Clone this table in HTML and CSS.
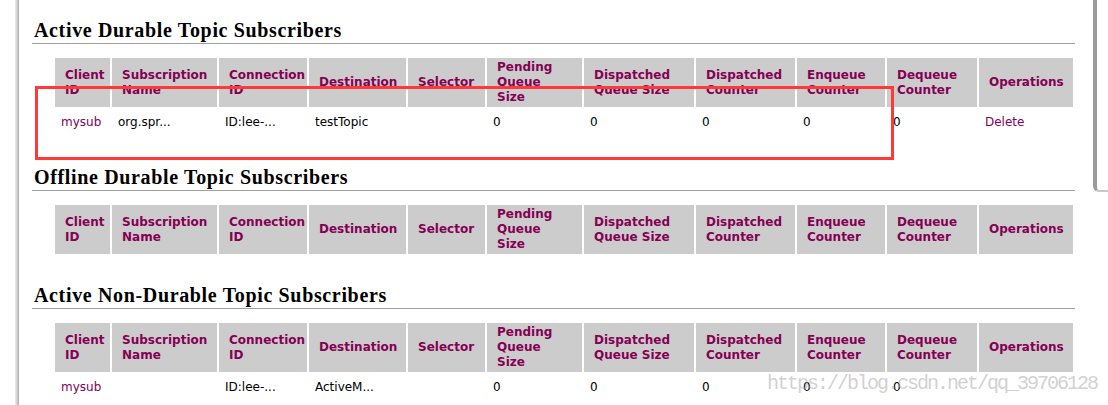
FILE: index.html
```html
<!DOCTYPE html>
<html>
<head>
<meta charset="utf-8">
<link rel="stylesheet" href="styles.css">
</head>
<body>
<div class="frame-left"></div>
<div class="frame-right"></div>
<main class="page">
  <h2 class="section-title">Active Durable Topic Subscribers</h2>
  <table class="grid">
    <colgroup>
      <col class="c1"><col class="c2"><col class="c3"><col class="c4"><col class="c5"><col class="c6"><col class="c7"><col class="c8"><col class="c9"><col class="c10"><col class="c11">
    </colgroup>
    <thead>
      <tr>
        <th>Client ID</th><th>Subscription Name</th><th>Connection ID</th><th>Destination</th><th>Selector</th><th>Pending Queue Size</th><th>Dispatched Queue Size</th><th>Dispatched Counter</th><th>Enqueue Counter</th><th>Dequeue Counter</th><th>Operations</th>
      </tr>
    </thead>
    <tbody>
      <tr>
        <td><a class="link">mysub</a></td><td>org.spr...</td><td>ID:lee-...</td><td>testTopic</td><td></td><td>0</td><td>0</td><td>0</td><td>0</td><td>0</td><td><a class="link">Delete</a></td>
      </tr>
    </tbody>
  </table>

  <h2 class="section-title">Offline Durable Topic Subscribers</h2>
  <table class="grid">
    <colgroup>
      <col class="c1"><col class="c2"><col class="c3"><col class="c4"><col class="c5"><col class="c6"><col class="c7"><col class="c8"><col class="c9"><col class="c10"><col class="c11">
    </colgroup>
    <thead>
      <tr>
        <th>Client ID</th><th>Subscription Name</th><th>Connection ID</th><th>Destination</th><th>Selector</th><th>Pending Queue Size</th><th>Dispatched Queue Size</th><th>Dispatched Counter</th><th>Enqueue Counter</th><th>Dequeue Counter</th><th>Operations</th>
      </tr>
    </thead>
  </table>

  <h2 class="section-title">Active Non-Durable Topic Subscribers</h2>
  <table class="grid">
    <colgroup>
      <col class="c1"><col class="c2"><col class="c3"><col class="c4"><col class="c5"><col class="c6"><col class="c7"><col class="c8"><col class="c9"><col class="c10"><col class="c11">
    </colgroup>
    <thead>
      <tr>
        <th>Client ID</th><th>Subscription Name</th><th>Connection ID</th><th>Destination</th><th>Selector</th><th>Pending Queue Size</th><th>Dispatched Queue Size</th><th>Dispatched Counter</th><th>Enqueue Counter</th><th>Dequeue Counter</th><th>Operations</th>
      </tr>
    </thead>
    <tbody>
      <tr>
        <td><a class="link">mysub</a></td><td></td><td>ID:lee-...</td><td>ActiveM...</td><td></td><td>0</td><td>0</td><td>0</td><td>0</td><td>0</td><td></td>
      </tr>
    </tbody>
  </table>
</main>
<div class="highlight-box"></div>
<div class="watermark">https://blog.csdn.net/qq_39706128</div>
</body>
</html>
```
FILE: styles.css
```css
html, body {
  margin: 0;
  padding: 0;
  background: #fff;
  overflow: hidden;
}
body {
  width: 1108px;
  height: 405px;
  position: relative;
  font-family: "DejaVu Sans", Verdana, sans-serif;
}
.page {
  padding: 17px 33px 0 32px;
}
.section-title {
  margin: 0;
  font-family: "Liberation Serif", "Times New Roman", serif;
  font-weight: bold;
  font-size: 20px;
  letter-spacing: 0.65px;
  line-height: 24px;
  padding: 1px 0 1px 2px;
  border-bottom: 1px solid #a0a0a0;
  color: #000;
}
.grid {
  table-layout: fixed;
  border-collapse: separate;
  border-spacing: 2px;
  width: 1022px;
  margin: 12px 0 26px 21px;
}
.c1 { width: 55px; }
.c2 { width: 105px; }
.c3 { width: 88px; }
.c4 { width: 97px; }
.c5 { width: 77px; }
.c6 { width: 95px; }
.c7 { width: 110px; }
.c8 { width: 99px; }
.c9 { width: 88px; }
.c10 { width: 90px; }
.c11 { width: 94px; }
.grid th {
  box-sizing: border-box;
  height: 49px;
  padding: 2px 10px 2px 10px;
  background: #cccccc;
  color: #850055;
  font-size: 12px;
  line-height: 15px;
  font-weight: bold;
  text-align: left;
  vertical-align: middle;
}
.grid td {
  box-sizing: border-box;
  height: 27px;
  padding: 0 4px 0 6px;
  font-size: 12px;
  line-height: 15px;
  color: #000;
  vertical-align: middle;
  white-space: nowrap;
  overflow: hidden;
}
.link {
  color: #850055;
  text-decoration: none;
}
.frame-left {
  position: absolute;
  left: 15px;
  top: 0;
  width: 4px;
  height: 405px;
  background: linear-gradient(to right, #ececec, #d4d4d4 50%, #a8a8a8);
}
.frame-right {
  position: absolute;
  right: 0;
  top: 0;
  width: 11px;
  height: 190px;
  border-left: 4px solid #9a9a9a;
  border-bottom: 2px solid #c8c8c8;
  border-bottom-left-radius: 6px;
  background: #fff;
}
.highlight-box {
  position: absolute;
  left: 35px;
  top: 86px;
  width: 853px;
  height: 68px;
  border: 3px solid #ff3838;
}
.watermark {
  position: absolute;
  left: 767px;
  top: 372px;
  font-family: "Liberation Mono", "Courier New", monospace;
  font-size: 20px;
  letter-spacing: -2px;
  line-height: 24px;
  color: rgba(170, 170, 170, 0.55);
  white-space: nowrap;
}
```
